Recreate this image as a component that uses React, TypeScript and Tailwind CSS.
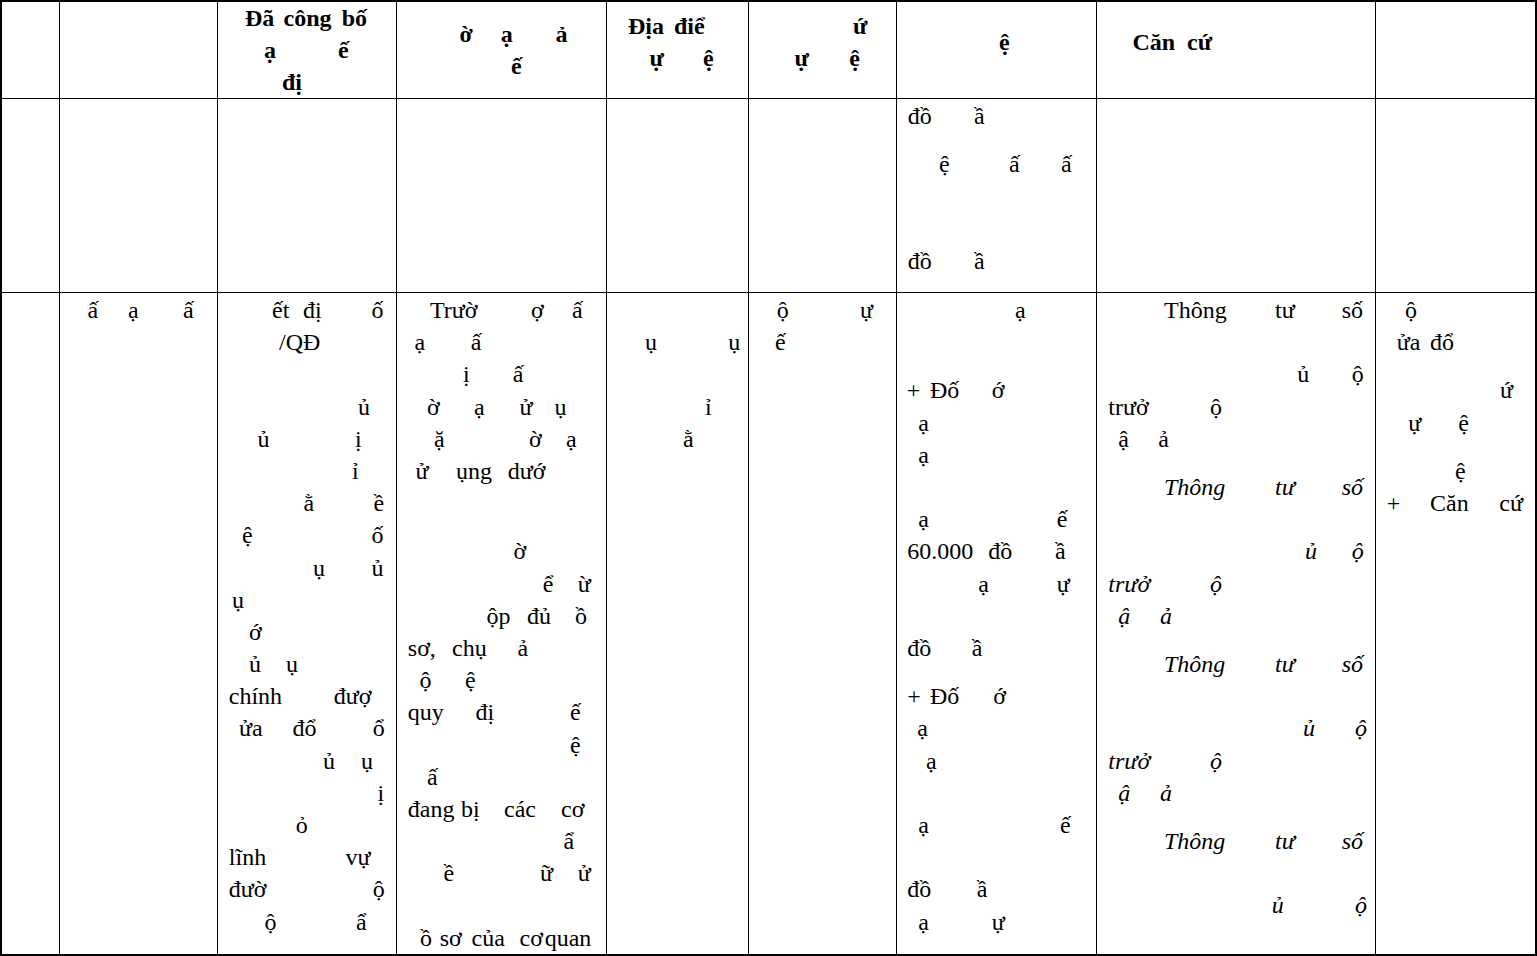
import React from "react"

// one fragment = [page x of its left edge, text]
type Frag = [number, string]
type Line = { k: number; f: Frag[]; i?: boolean }

const LINE = 32.2
const COL_LEFT = [2, 60, 218, 397, 607, 749, 897, 1097, 1376]
const SERIF = '"Liberation Serif", "Times New Roman", Tinos, "DejaVu Serif", serif'

const header: Line[][] = [
  [],
  [],
  [
    { k: 0, f: [[245, "Đã"], [283.6, "công"], [341.7, "bố"]] },
    { k: 1, f: [[264, "ạ"], [338, "ế"]] },
    { k: 2, f: [[282, "đị"]] },
  ],
  [
    { k: 0.5, f: [[459.5, "ờ"], [500.7, "ạ"], [555.5, "ả"]] },
    { k: 1.5, f: [[511, "ế"]] },
  ],
  [
    { k: 0.25, f: [[628, "Địa"], [674, "điể"]] },
    { k: 1.25, f: [[649.5, "ự"], [703, "ệ"]] },
  ],
  [
    { k: 0.25, f: [[853, "ứ"]] },
    { k: 1.25, f: [[794.4, "ự"], [849.3, "ệ"]] },
  ],
  [{ k: 0.75, f: [[999, "ệ"]] }],
  [{ k: 0.75, f: [[1132.5, "Căn"], [1187, "cứ"]] }],
  [],
]

const second: Line[][] = [
  [],
  [],
  [],
  [],
  [],
  [],
  [
    { k: 0, f: [[907.8, "đồ"], [973.9, "ầ"]] },
    { k: 1.5, f: [[939, "ệ"], [1009, "ấ"], [1061, "ấ"]] },
    { k: 4.5, f: [[907.8, "đồ"], [973.9, "ầ"]] },
  ],
  [],
  [],
]

const third: Line[][] = [
  [],
  [{ k: 0, f: [[87.5, "ấ"], [128, "ạ"], [183, "ấ"]] }],
  [
    { k: 0, f: [[272, "ết"], [303, "đị"], [371.6, "ố"]] },
    { k: 1, f: [[279, "/QĐ"]] },
    { k: 3, f: [[358, "ủ"]] },
    { k: 4, f: [[257.6, "ủ"], [355, "ị"]] },
    { k: 5, f: [[352, "ỉ"]] },
    { k: 6, f: [[303.5, "ằ"], [373.5, "ề"]] },
    { k: 7, f: [[242, "ệ"], [371.6, "ố"]] },
    { k: 8, f: [[313, "ụ"], [371.6, "ủ"]] },
    { k: 9, f: [[232, "ụ"]] },
    { k: 10, f: [[249, "ớ"]] },
    { k: 11, f: [[249, "ủ"], [286, "ụ"]] },
    { k: 12, f: [[228.8, "chính"], [333.8, "đượ"]] },
    { k: 13, f: [[239, "ửa"], [292.6, "đổ"], [372.8, "ổ"]] },
    { k: 14, f: [[323, "ủ"], [361, "ụ"]] },
    { k: 15, f: [[377.4, "ị"]] },
    { k: 16, f: [[295.7, "ỏ"]] },
    { k: 17, f: [[228.8, "lĩnh"], [345.5, "vự"]] },
    { k: 18, f: [[228.8, "đườ"], [372.8, "ộ"]] },
    { k: 19, f: [[264.6, "ộ"], [356, "ẩ"]] },
  ],
  [
    { k: 0, f: [[430, "Trườ"], [531, "ợ"], [572, "ấ"]] },
    { k: 1, f: [[414.4, "ạ"], [470.8, "ấ"]] },
    { k: 2, f: [[463, "ị"], [512.8, "ấ"]] },
    { k: 3, f: [[427, "ờ"], [474, "ạ"], [519.5, "ử"], [554.5, "ụ"]] },
    { k: 4, f: [[434, "ặ"], [529, "ờ"], [566, "ạ"]] },
    { k: 5, f: [[415.6, "ử"], [456, "ụng"], [507.8, "dướ"]] },
    { k: 7.5, f: [[513.6, "ờ"]] },
    { k: 8.5, f: [[542.8, "ể"], [577.8, "ừ"]] },
    { k: 9.5, f: [[486.4, "ộp"], [527, "đủ"], [575, "ồ"]] },
    { k: 10.5, f: [[407.8, "sơ,"], [452, "chụ"], [517.5, "ả"]] },
    { k: 11.5, f: [[419.5, "ộ"], [465, "ệ"]] },
    { k: 12.5, f: [[407.8, "quy"], [475.5, "đị"], [570, "ế"]] },
    { k: 13.5, f: [[570, "ệ"]] },
    { k: 14.5, f: [[427, "ấ"]] },
    { k: 15.5, f: [[407.8, "đang"], [461, "bị"], [504, "các"], [561, "cơ"]] },
    { k: 16.5, f: [[563.4, "ẩ"]] },
    { k: 17.5, f: [[443.6, "ề"], [540, "ữ"], [577.8, "ử"]] },
    { k: 19.5, f: [[420, "ồ"], [439.7, "sơ"], [471.6, "của"], [519.5, "cơ"], [544.7, "quan"]] },
  ],
  [
    { k: 1, f: [[645, "ụ"], [728.3, "ụ"]] },
    { k: 3, f: [[705, "ỉ"]] },
    { k: 4, f: [[683, "ằ"]] },
  ],
  [
    { k: 0, f: [[776.7, "ộ"], [860, "ự"]] },
    { k: 1, f: [[775, "ế"]] },
  ],
  [
    { k: 0, f: [[1015, "ạ"]] },
    { k: 2.5, f: [[906.7, "+"], [930, "Đố"], [991.7, "ớ"]] },
    { k: 3.5, f: [[918.3, "ạ"]] },
    { k: 4.5, f: [[918.3, "ạ"]] },
    { k: 6.5, f: [[918.3, "ạ"], [1056.7, "ế"]] },
    { k: 7.5, f: [[907.3, "60.000"], [988.3, "đồ"], [1055, "ầ"]] },
    { k: 8.5, f: [[978.3, "ạ"], [1056.7, "ự"]] },
    { k: 10.5, f: [[907.3, "đồ"], [971.7, "ầ"]] },
    { k: 12, f: [[907.3, "+"], [930, "Đố"], [993.3, "ớ"]] },
    { k: 13, f: [[917.3, "ạ"]] },
    { k: 14, f: [[926, "ạ"]] },
    { k: 16, f: [[918.3, "ạ"], [1060, "ế"]] },
    { k: 18, f: [[907.3, "đồ"], [976.7, "ầ"]] },
    { k: 19, f: [[918.3, "ạ"], [991.7, "ự"]] },
  ],
  [
    { k: 0, f: [[1164, "Thông"], [1275, "tư"], [1341.7, "số"]] },
    { k: 2, f: [[1297.3, "ủ"], [1351.7, "ộ"]] },
    { k: 3, f: [[1108.3, "trưở"], [1210, "ộ"]] },
    { k: 4, f: [[1118.3, "ậ"], [1158.3, "ả"]] },
    { k: 5.5, i: true, f: [[1164, "Thông"], [1275, "tư"], [1341.7, "số"]] },
    { k: 7.5, i: true, f: [[1305, "ủ"], [1351.7, "ộ"]] },
    { k: 8.5, i: true, f: [[1108.3, "trưở"], [1210, "ộ"]] },
    { k: 9.5, i: true, f: [[1118.3, "ậ"], [1160, "ả"]] },
    { k: 11, i: true, f: [[1164, "Thông"], [1275, "tư"], [1341.7, "số"]] },
    { k: 13, i: true, f: [[1303, "ủ"], [1355, "ộ"]] },
    { k: 14, i: true, f: [[1108.3, "trưở"], [1210, "ộ"]] },
    { k: 15, i: true, f: [[1118.3, "ậ"], [1160, "ả"]] },
    { k: 16.5, i: true, f: [[1164, "Thông"], [1275, "tư"], [1341.7, "số"]] },
    { k: 18.5, i: true, f: [[1271.7, "ủ"], [1355, "ộ"]] },
  ],
  [
    { k: 0, f: [[1405, "ộ"]] },
    { k: 1, f: [[1396.7, "ửa"], [1430, "đổ"]] },
    { k: 2.5, f: [[1500, "ứ"]] },
    { k: 3.5, f: [[1408.3, "ự"], [1458.3, "ệ"]] },
    { k: 5, f: [[1455, "ệ"]] },
    { k: 6, f: [[1386.7, "+"], [1430, "Căn"], [1499.3, "cứ"]] },
  ],
]

function Cell({
  lines,
  col,
  row,
}: {
  lines: Line[]
  col: number
  row: number
}) {
  let end = 0
  return (
    <div
      className={`overflow-hidden border-black ${col < 8 ? "border-r" : ""} ${
        row < 2 ? "border-b" : ""
      } ${row > 0 ? "pt-px" : "font-bold"}`}
    >
      {lines.map((ln) => {
        const mt = (ln.k - end) * LINE
        end = ln.k + 1
        return (
          <div
            key={ln.k}
            className={`relative h-[32.2px] ${ln.i ? "italic" : ""}`}
            style={{ marginTop: mt }}
          >
            {ln.f.map(([x, t], j) => (
              <span
                key={j}
                className="absolute top-0 whitespace-pre"
                style={{ left: x - COL_LEFT[col] }}
              >
                {t}
              </span>
            ))}
          </div>
        )
      })}
    </div>
  )
}

export default function App() {
  const rows = [header, second, third]
  return (
    <div
      className="w-[1537px] h-[956px] bg-white overflow-hidden font-serif text-[24px] leading-[32.2px] text-black"
      style={{ fontFamily: SERIF }}
    >
      <div className="grid h-[956px] w-[1537px] grid-cols-[58px_158px_179px_210px_142px_148px_200px_279px_159px] grid-rows-[97px_194px_661px] border-2 border-black">
        {rows.map((cells, r) =>
          cells.map((lines, c) => (
            <Cell key={`${r}-${c}`} lines={lines} col={c} row={r} />
          ))
        )}
      </div>
    </div>
  )
}
